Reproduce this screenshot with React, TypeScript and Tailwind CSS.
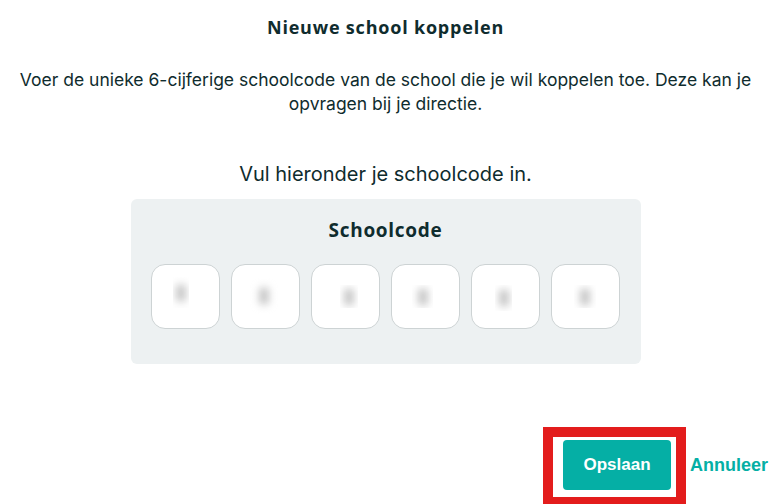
const blobs = [
  { w: 16, h: 31, dx: -5, dy: -4 },
  { w: 28, h: 36, dx: -2, dy: -1 },
  { w: 18, h: 23, dx: 3, dy: 0 },
  { w: 21, h: 23, dx: -3, dy: 0 },
  { w: 17, h: 26, dx: -2, dy: 1 },
  { w: 22, h: 23, dx: -1, dy: 0 },
];

const heading = { fontFamily: '"Open Sans", Lato, sans-serif' };

function CodeBox({ w, h, dx, dy }: { w: number; h: number; dx: number; dy: number }) {
  return (
    <div className="w-[69px] h-[65px] rounded-[14px] border border-[#cdd3d4] bg-white flex items-center justify-center">
      <div
        className="overflow-hidden flex items-center justify-center"
        style={{ width: w, height: h, transform: `translate(${dx}px, ${dy}px)` }}
      >
        <div className="w-[8px] h-[16px] bg-[#b8b8b8] blur-[4px]" />
      </div>
    </div>
  );
}

export default function App() {
  return (
    <div className="w-full h-[504px] bg-white text-[#0f2c2e] flex flex-col items-center relative overflow-hidden" style={{ fontFamily: 'Inter, "Open Sans", sans-serif' }}>
      <div className="w-full pr-[5px] flex flex-col items-center">
        <h1 className="mt-[15px] text-[18px] leading-6 font-bold tracking-[0.8px]" style={heading}>Nieuwe school koppelen</h1>
        <p className="mt-[29px] px-3 text-center text-[17.5px] leading-6">
          Voer de unieke 6-cijferige schoolcode van de school die je wil koppelen toe. Deze kan je opvragen bij je directie.
        </p>
        <p className="mt-[44px] text-[20px] leading-7">Vul hieronder je schoolcode in.</p>

        <div className="mt-[11px] w-[510px] h-[165px] bg-[#edf1f2] rounded-md flex flex-col items-center">
          <h2 className="mt-[19px] text-[19px] leading-6 font-bold tracking-[0.7px]" style={heading}>Schoolcode</h2>
          <div className="mt-[22px] flex gap-[11px]">
            {blobs.map((b, i) => (
              <CodeBox key={i} {...b} />
            ))}
          </div>
        </div>
      </div>

      <div className="mt-[76px] self-stretch flex items-center justify-end pr-2 gap-[19px]" style={{ fontFamily: '"Liberation Sans", Arial, sans-serif' }}>
        <div className="relative">
          <button className="w-[108px] h-[50px] rounded bg-[#05afa5] text-white text-[17px] font-bold">Opslaan</button>
          <div className="absolute left-[-20px] top-[-13px] w-[143px] h-[80px] border-[10px] border-[#e31c1c] pointer-events-none" />
        </div>
        <button className="text-[#05afa5] text-[18px] font-bold">Annuleer</button>
      </div>
    </div>
  );
}
